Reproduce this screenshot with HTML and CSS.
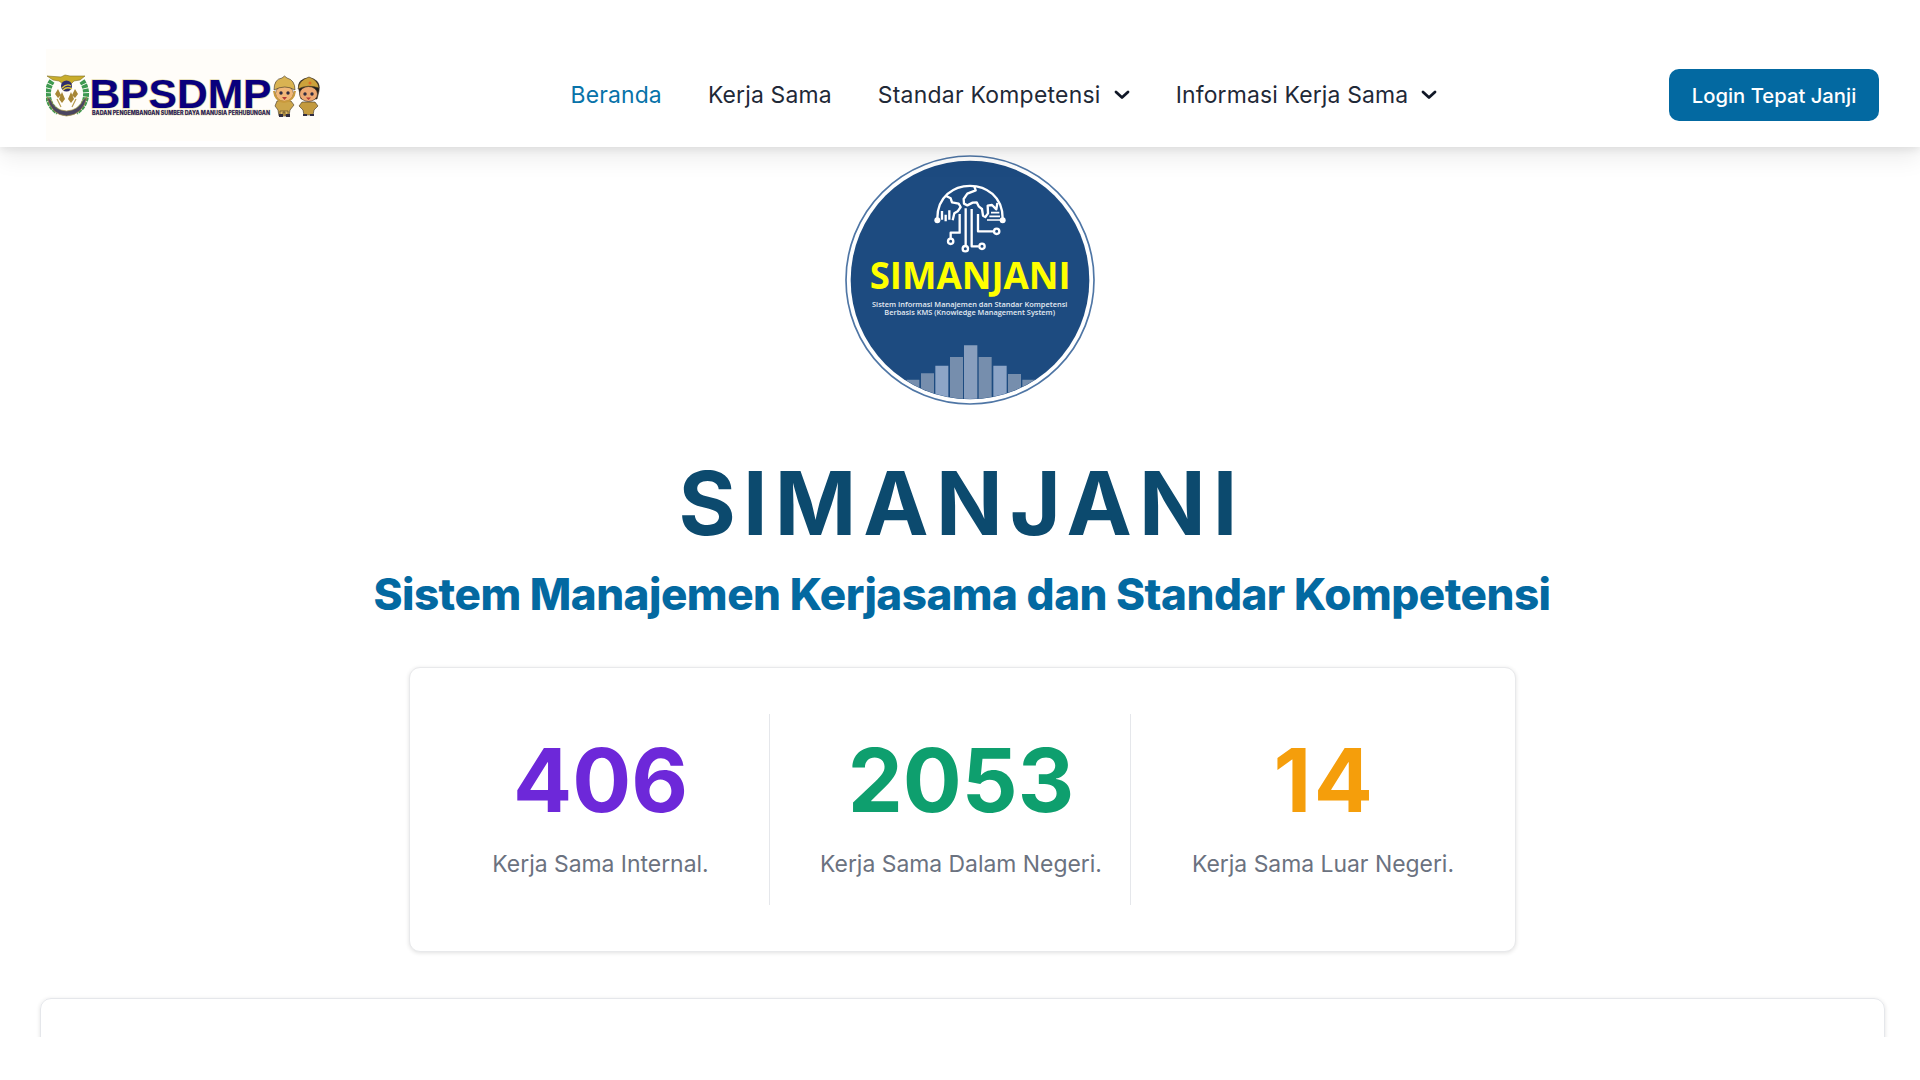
FILE: index.html
```html
<!DOCTYPE html>
<html lang="id">
<head>
<meta charset="utf-8">
<title>SIMANJANI</title>
<link rel="stylesheet" href="styles.css">
</head>
<body>
<header class="navbar">
  <a class="brand" href="#" aria-label="BPSDMP">
    <svg width="274" height="92" viewBox="0 0 274 92">
      <rect width="274" height="92" fill="#fffdf9"/>
      <g>
        <path d="M6 32C-1 42 1 56 12 63M36 32C43 42 41 56 30 63" fill="none" stroke="#3d9950" stroke-width="6" stroke-dasharray="3.500 .8"/>
        <path d="M1 48Q5 66 20.500 67Q37 66 41 48L37 51Q33 61 20.500 62Q8 61 5 51Z" fill="#4a4560" stroke="#a99a4a" stroke-width=".7"/>
        <path d="M1 27L15 28L19 26L24 27L39 27L34 31L28 32L25 35H17L13 32L7 31Z" fill="#c9ad2b" stroke="#7d7026" stroke-width=".6"/>
        <circle cx="20.500" cy="37" r="5.500" fill="#302e6c"/>
        <path d="M16 39Q21 34 25 37M17 41Q21 37 26 40" stroke="#dfc93b" stroke-width="1.300" fill="none"/>
        <path d="M12 40L15 46L12 49L9 45ZM29 40L32 45L29 49L26 46ZM16 43L19 50L16 54L13 50ZM25 43L28 50L25 54L22 50Z" fill="#a78635"/>
        <path d="M11 50L15 58M30 50L26 58" stroke="#b69c50" stroke-width="1.200"/>
      </g>
      <text class="logo-name" x="43.500" y="58.500" textLength="182" lengthAdjust="spacingAndGlyphs">BPSDMP</text>
      <text class="logo-sub" x="46" y="65.500" textLength="178" lengthAdjust="spacingAndGlyphs">BADAN PENGEMBANGAN SUMBER DAYA MANUSIA PERHUBUNGAN</text>
      <g stroke="#3d3325" stroke-width=".6">
        <path d="M231 52Q238 49 245 52L248 56L244 61L243 67H233L232 61L229 57Z" fill="#cda64b"/>
        <path d="M234 62H242V66H239V63H237V66H234Z" fill="#dfba62"/>
        <ellipse cx="238.500" cy="44.500" rx="9" ry="8" fill="#f1b879"/>
        <path d="M228 41Q228 30 236 29L238.500 27L241 29Q249 31 249 41Q239 35 228 41Z" fill="#d9b352"/>
        <path d="M228 42Q229 52 238 53Q248 52 249 42" fill="none" stroke="#c99a3d" stroke-width="2"/>
        <path d="M253 41Q250 30 263 29Q275 30 273 42L271 50H255Z" fill="#211d1b"/>
        <ellipse cx="262.500" cy="45" rx="9" ry="7.500" fill="#eda973"/>
        <path d="M252 40Q253 31 263 28Q272 31 273 39Q262 35 252 40Z" fill="#cca23b"/>
        <path d="M256 53H269L272 57L268 61L267 66H258L257 61L253 57Z" fill="#c39a3e"/>
      </g>
      <g fill="#302c40"><circle cx="235" cy="44" r="1.700"/><circle cx="242" cy="44" r="1.700"/><circle cx="259" cy="45" r="1.700"/><circle cx="266" cy="45" r="1.700"/><path d="M233 65H237V68H233ZM240 65H244V68H240ZM257 65H261V67H257ZM264 65H268V67H264Z"/></g>
      <path d="M236 48H241L238.500 51ZM260 48.500H265L262.500 51Z" fill="#b23b37"/>
      <circle cx="264" cy="34" r="1.500" fill="#e06c26"/>
    </svg>
  </a>
  <nav class="menu">
    <a class="menu-link menu-link-active" href="#">Beranda</a>
    <a class="menu-link" href="#">Kerja Sama</a>
    <a class="menu-link menu-link-wide" href="#">Standar Kompetensi<svg class="chevron" viewBox="0 0 16 10"><path d="M2 2L8 7.500L14 2"/></svg></a>
    <a class="menu-link" href="#">Informasi Kerja Sama<svg class="chevron" viewBox="0 0 16 10"><path d="M2 2L8 7.500L14 2"/></svg></a>
  </nav>
  <a class="login" href="#">Login Tepat Janji</a>
</header>
<main class="page">
  <svg class="emblem" viewBox="45 28 750 750">
    <defs><clipPath id="disc"><circle cx="420" cy="403" r="357"/></clipPath></defs>
    <circle cx="420" cy="403" r="372" fill="#fff" stroke="#4f76a5" stroke-width="5"/>
    <circle cx="420" cy="403" r="358" fill="#1d4b80"/>
    <g clip-path="url(#disc)">
      <path d="M230 702h38v80h-38zM273 683h39v100h-39zM360 634h39v150h-39zM446 634h39v150h-39zM534 685h39v100h-39zM577 702h38v80h-38z" fill="#768ead"/>
      <path d="M316 660h39v120h-39zM490 660h40v120h-40z" fill="#8da5c7"/>
      <path d="M402 599h40v180h-40z" fill="#899fbe"/>
    </g>
    <g fill="none" stroke="#fff" stroke-width="7" stroke-linejoin="round">
      <path d="M322 218C322 88 518 88 518 218"/>
      <path d="M347 150L362 158L366 170L386 174L392 184L383 197L373 203L368 224M433 122L437 134L412 144L401 160L402 174L412 179L428 171L440 170L446 182L456 190L459 210L466 214L474 203L473 180L486 178L499 191L502 172"/>
      <path d="M336 196V222M347 207V227M358 194V222"/>
      <path d="M483 201H508M478 212H510M471 223H510" stroke-width="5"/>
      <path d="M389 205V261H362V278M407 188V298M425 190V302H446M444 205V257H490"/>
      <circle cx="362" cy="287" r="8"/><circle cx="406" cy="309" r="8"/><circle cx="456" cy="302" r="8"/><circle cx="500" cy="257" r="8"/>
    </g>
    <circle cx="322" cy="224" r="9" fill="#fff"/><circle cx="518" cy="224" r="9" fill="#fff"/>
    <text class="emblem-name" x="119" y="430" textLength="603" lengthAdjust="spacingAndGlyphs">SIMANJANI</text>
    <text class="emblem-sub" x="126" y="483" textLength="586" lengthAdjust="spacingAndGlyphs">Sistem Informasi Manajemen dan Standar Kompetensi</text>
    <text class="emblem-sub" x="163" y="509" textLength="512" lengthAdjust="spacingAndGlyphs">Berbasis KMS (Knowledge Management System)</text>
  </svg>
  <h1 class="title">SIMANJANI</h1>
  <h2 class="subtitle">Sistem Manajemen Kerjasama dan Standar Kompetensi</h2>
  <section class="stats">
    <div class="stat"><span class="stat-value purple">406</span><span class="stat-label">Kerja Sama Internal.</span></div>
    <div class="stat"><span class="stat-value green">2053</span><span class="stat-label">Kerja Sama Dalam Negeri.</span></div>
    <div class="stat"><span class="stat-value amber">14</span><span class="stat-label">Kerja Sama Luar Negeri.</span></div>
  </section>
  <div class="panel-window"><section class="panel"></section></div>
</main>
</body>
</html>
```
FILE: styles.css
```css
* { box-sizing: border-box; }
body { margin: 0; height: 1080px; overflow: hidden; background: #fff; font-family: Inter, "Liberation Sans", sans-serif; color: #1f2937; }
a { color: inherit; text-decoration: none; }
h1, h2 { margin: 0; }
.navbar { position: relative; z-index: 1; display: flex; align-items: center; height: 147px; padding: 43px 41px 0 46px; background: #fff; box-shadow: 0 12px 22px 0 rgba(0, 0, 0, .07), 0 3px 8px 0 rgba(0, 0, 0, .08); }
.brand svg { display: block; }
.menu { display: flex; align-items: center; gap: 46px; margin-left: 250.500px; font-size: 22.900px; line-height: 34px; letter-spacing: .17px; }
.menu-link { display: flex; align-items: center; gap: 13px; }
.menu-link-active { color: #0873a9; }
.menu-link-wide { letter-spacing: .28px; }
.chevron { width: 16px; height: 10px; fill: none; stroke: #111827; stroke-width: 2.8; stroke-linecap: round; stroke-linejoin: round; }
.login { display: flex; align-items: center; justify-content: center; width: 210px; height: 52px; margin-left: auto; padding-top: 1px; border-radius: 10px; background: #0369a1; color: #fff; font-size: 20.250px; font-weight: 500; }
.logo-name { font: 700 40px "Liberation Sans", sans-serif; fill: #09007d; stroke: #d8cf91; stroke-width: 1.200px; paint-order: stroke; }
.logo-sub { font: 800 5.800px Inter, sans-serif; fill: #29205a; stroke: #d8cf91; stroke-width: .6px; paint-order: stroke; }
.page { display: flex; flex-direction: column; align-items: center; padding-top: 8px; }
.emblem { width: 250px; height: 250px; margin-left: 20px; }
.emblem-name { font: 700 110px "Open Sans", "Noto Sans", sans-serif; fill: #ff0; }
.emblem-sub { font: 600 22px "Open Sans", "Noto Sans", sans-serif; fill: #e3eaf2; }
.title { margin: 54px 0 0 3px; font-size: 87.500px; line-height: 88px; font-weight: 700; letter-spacing: 7.200px; color: #0c4a6e; }
.subtitle { margin: 22px 0 0 4px; font-size: 44px; line-height: 50px; font-weight: 800; letter-spacing: -.510px; color: #0369a1; }
.stats { display: grid; grid-template-columns: 360px 361px 384px; width: 1107px; height: 285px; margin: 48px 0 0 5px; padding: 46px 0; border: 1px solid #e8e9eb; border-radius: 11px; background: #fff; box-shadow: 0 1px 4px rgba(0, 0, 0, .12); }
.stat { display: flex; flex-direction: column; align-items: center; padding: 22px 0 0 22px; border-right: 1px solid #e5e7eb; }
.stat:last-child { padding-left: 0; border-right: 0; }
.stat-value { font-size: 87.500px; line-height: 88px; font-weight: 700; }
.stat-label { margin-top: 23px; font-size: 22.900px; line-height: 34px; color: #6b7280; }
.purple { color: #6d28d9; }
.green { color: #0e9f6e; }
.amber { padding-left: 3px; color: #f59e0b; letter-spacing: 2.500px; }
.panel-window { width: 1855px; height: 44px; margin: 41px 0 0 5px; padding: 5px 5px 0; overflow: hidden; }
.panel { height: 120px; border: 1px solid #e5e7eb; border-radius: 11px; box-shadow: 0 1px 4px rgba(0, 0, 0, .12); }
```
